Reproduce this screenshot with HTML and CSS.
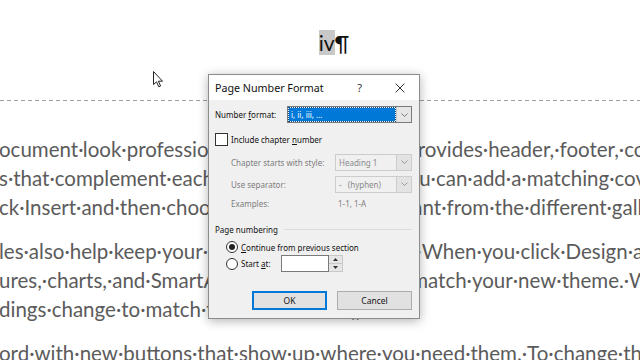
FILE: index.html
```html
<!DOCTYPE html>
<html lang="en">
<head>
    <meta charset="UTF-8">
    <title>Page Number Format</title>
    <link rel="stylesheet" href="styles.css">
</head>
<body>
    <div class="header">
        <span class="pagenum"><span class="sel">iv</span>¶</span>
    </div>
    <div class="divider"></div>

    <div class="doc">
        <p>
            <span class="line">ocument·look·professionally·produced,·Word·provides·header,·footer,·cover·page</span>
            <span class="line">s·that·complement·each·other.·For·example,·you·can·add·a·matching·cover·page</span>
            <span class="line">ck·Insert·and·then·choose·the·elements·you·want·from·the·different·galleries.</span>
        </p>
        <p>
            <span class="line">les·also·help·keep·your·document·coordinated.·When·you·click·Design·and</span>
            <span class="line">ures,·charts,·and·SmartArt·graphics·change·to·match·your·new·theme.·When</span>
            <span class="line">dings·change·to·match·the·new·theme.¶</span>
        </p>
        <p>
            <span class="line">ord·with·new·buttons·that·show·up·where·you·need·them.·To·change·the·way</span>
        </p>
    </div>

    <!-- mouse pointer -->
    <svg class="pointer" width="11" height="17" viewBox="0 0 11 17">
        <path d="M0.5 0.5 L0.5 13.5 L3.5 10.8 L5.8 15.8 L7.6 15 L5.4 10.2 L9.5 10.2 Z" fill="#fff" stroke="#222" stroke-width="1"/>
    </svg>

    <!-- Page Number Format dialog -->
    <div class="dialog">
        <div class="titlebar">
            <span class="title">Page Number Format</span>
            <span class="help">?</span>
            <svg class="close" width="10" height="10" viewBox="0 0 10 10">
                <path d="M0.5 0.5 L9.5 9.5 M9.5 0.5 L0.5 9.5" stroke="#333" stroke-width="1"/>
            </svg>
        </div>
        <div class="dlg-body">
            <div class="row row-format">
                <span class="label">Number <u>f</u>ormat:</span>
                <div class="select wide">
                    <span class="value"><span class="hl">i, ii, iii, ...</span></span>
                    <span class="arrow"><svg width="7" height="4" viewBox="0 0 7 4"><path d="M0.5 0.5 L3.5 3.5 L6.5 0.5" fill="none" stroke="#777" stroke-width="1"/></svg></span>
                </div>
            </div>

            <div class="row row-check">
                <span class="checkbox"></span>
                <span class="label">Include chapter <u>n</u>umber</span>
            </div>

            <div class="row row-sub">
                <span class="label dim">Chapter starts with style:</span>
                <div class="select narrow disabled">
                    <span class="value">Heading 1</span>
                    <span class="arrow"><svg width="7" height="4" viewBox="0 0 7 4"><path d="M0.5 0.5 L3.5 3.5 L6.5 0.5" fill="none" stroke="#999" stroke-width="1"/></svg></span>
                </div>
            </div>
            <div class="row row-sub row-sep">
                <span class="label dim">Use separator:</span>
                <div class="select narrow disabled">
                    <span class="value">-&nbsp;&nbsp;&nbsp;(hyphen)</span>
                    <span class="arrow"><svg width="7" height="4" viewBox="0 0 7 4"><path d="M0.5 0.5 L3.5 3.5 L6.5 0.5" fill="none" stroke="#999" stroke-width="1"/></svg></span>
                </div>
            </div>
            <div class="row row-sub row-ex">
                <span class="label dim">Examples:</span>
                <span class="example dim">1-1, 1-A</span>
            </div>

            <div class="group">
                <span class="label">Page numbering</span>
                <span class="rule"></span>
            </div>

            <div class="row row-radio">
                <span class="radio checked"></span>
                <span class="label"><u>C</u>ontinue from previous section</span>
            </div>
            <div class="row row-radio row-start">
                <span class="radio"></span>
                <span class="label start-label">Start <u>a</u>t:</span>
                <div class="spin">
                    <span class="spin-input"></span>
                    <span class="spin-btns">
                        <span class="spin-btn"><svg width="5" height="3" viewBox="0 0 5 3"><path d="M0 3 L2.5 0 L5 3 Z" fill="#333"/></svg></span>
                        <span class="spin-btn"><svg width="5" height="3" viewBox="0 0 5 3"><path d="M0 0 L2.5 3 L5 0 Z" fill="#333"/></svg></span>
                    </span>
                </div>
            </div>

            <div class="buttons">
                <button class="btn default">OK</button>
                <button class="btn">Cancel</button>
            </div>
        </div>
    </div>
</body>
</html>
```

FILE: styles.css
```css
body {
    margin: 0;
    width: 640px;
    height: 360px;
    overflow: hidden;
    position: relative;
    background-color: #fff;
    font-family: 'Lato', 'Noto Sans', sans-serif;
}
.header {
    height: 100px;
    box-sizing: border-box;
    padding-top: 30px;
    padding-left: 28px;
    display: flex;
    justify-content: center;
}
.pagenum {
    font-size: 21px;
    line-height: 26px;
    color: #111;
}
.sel {
    background-color: #c8c8c8;
}
.divider {
    height: 1px;
    background: repeating-linear-gradient(to right, #a0a0a0 0 4px, transparent 4px 7px);
}
.doc {
    margin-left: -1px;
    padding-top: 34px;
    color: #5b5b5b;
    font-size: 20.5px;
    line-height: 29px;
}
.doc p {
    margin: 0 0 15px 0;
}
.line {
    display: block;
    white-space: nowrap;
}
.pointer {
    position: absolute;
    left: 153px;
    top: 71px;
}

/* dialog */
.dialog {
    position: absolute;
    left: 208px;
    top: 74px;
    width: 212px;
    height: 245px;
    box-sizing: border-box;
    border: 1px solid #8c8c8c;
    background-color: #f0f0f0;
    box-shadow: 0 2px 10px rgba(0, 0, 0, 0.3);
    font-family: 'Noto Sans', 'Open Sans', sans-serif;
    font-size: 8px;
    color: #111;
}
.titlebar {
    height: 25px;
    background-color: #fff;
    display: flex;
    align-items: center;
    padding: 0 14px 0 6px;
}
.title {
    font-size: 10.7px;
    flex: 1;
}
.help {
    font-size: 11px;
    margin-right: 33px;
    color: #333;
}
.dlg-body {
    padding: 6px 7px 0 6px;
}
.row {
    display: flex;
    align-items: center;
}
.row-format {
    height: 17px;
}
.row-format .label {
    width: 72px;
}
.select {
    display: flex;
    height: 17px;
    box-sizing: border-box;
    border: 1px solid #7a7a7a;
    background-color: #fff;
}
.select.wide {
    width: 125px;
}
.select.narrow {
    width: 77px;
    margin-left: auto;
}
.select .value {
    flex: 1;
    padding: 1px;
    display: flex;
    align-items: center;
}
.hl {
    display: block;
    width: 100%;
    height: 100%;
    background-color: #0078d7;
    color: #fff;
    font-size: 8px;
    line-height: 13px;
    padding-left: 2px;
    box-sizing: border-box;
    outline: 1px dotted #0a4a8a;
}
.select .arrow {
    width: 14px;
    border-left: 1px solid #c8c8c8;
    background-color: #e6e6e6;
    display: flex;
    align-items: center;
    justify-content: center;
}
.select.disabled {
    border-color: #cccccc;
    background-color: #f0f0f0;
}
.select.disabled .value {
    padding-left: 3px;
    color: #8a8a8a;
    font-size: 8px;
}
.select.disabled .arrow {
    background-color: #e3e3e3;
    border-left-color: #cccccc;
}
.row-check {
    margin-top: 10px;
    height: 13px;
}
.checkbox {
    width: 13px;
    height: 13px;
    box-sizing: border-box;
    border: 1px solid #333;
    background-color: #fff;
    margin-right: 3px;
}
.row-sub {
    margin-top: 7px;
    height: 18px;
    padding-left: 16px;
}
.row-sep {
    margin-top: 4px;
}
.row-ex {
    margin-top: 3px;
    height: 14px;
}
.dim {
    color: #7d7d7d;
}
.example {
    margin-left: auto;
    width: 74px;
}
.group {
    margin-top: 12px;
    height: 14px;
    display: flex;
    align-items: center;
}
.group .rule {
    flex: 1;
    height: 1px;
    background-color: #dcdcdc;
    margin-left: 6px;
}
.row-radio {
    margin-top: 4px;
    height: 14px;
    padding-left: 11px;
}
.row-start {
    margin-top: 1px;
    height: 17px;
}
.radio {
    width: 12px;
    height: 12px;
    box-sizing: border-box;
    border: 1px solid #333;
    border-radius: 50%;
    background-color: #fff;
    margin-right: 3px;
    display: flex;
    align-items: center;
    justify-content: center;
}
.radio.checked::after {
    content: "";
    width: 6px;
    height: 6px;
    border-radius: 50%;
    background-color: #222;
}
.start-label {
    width: 40px;
}
.spin {
    display: flex;
    height: 17px;
}
.spin-input {
    width: 48px;
    box-sizing: border-box;
    border: 1px solid #7a7a7a;
    background-color: #fff;
}
.spin-btns {
    display: flex;
    flex-direction: column;
    width: 14px;
    border: 1px solid #c8c8c8;
    border-left: none;
    box-sizing: border-box;
    background-color: #e6e6e6;
}
.spin-btn {
    flex: 1;
    display: flex;
    align-items: center;
    justify-content: center;
}
.spin-btn + .spin-btn {
    border-top: 1px solid #c8c8c8;
}
.buttons {
    margin-top: 19px;
    display: flex;
    justify-content: flex-end;
    gap: 10px;
}
.btn {
    width: 75px;
    height: 19px;
    box-sizing: border-box;
    border: 1px solid #adadad;
    background-color: #e1e1e1;
    font-family: 'Noto Sans', 'Open Sans', sans-serif;
    font-size: 8.5px;
    color: #111;
    padding: 0;
}
.btn.default {
    border: 2px solid #0078d7;
}
```
